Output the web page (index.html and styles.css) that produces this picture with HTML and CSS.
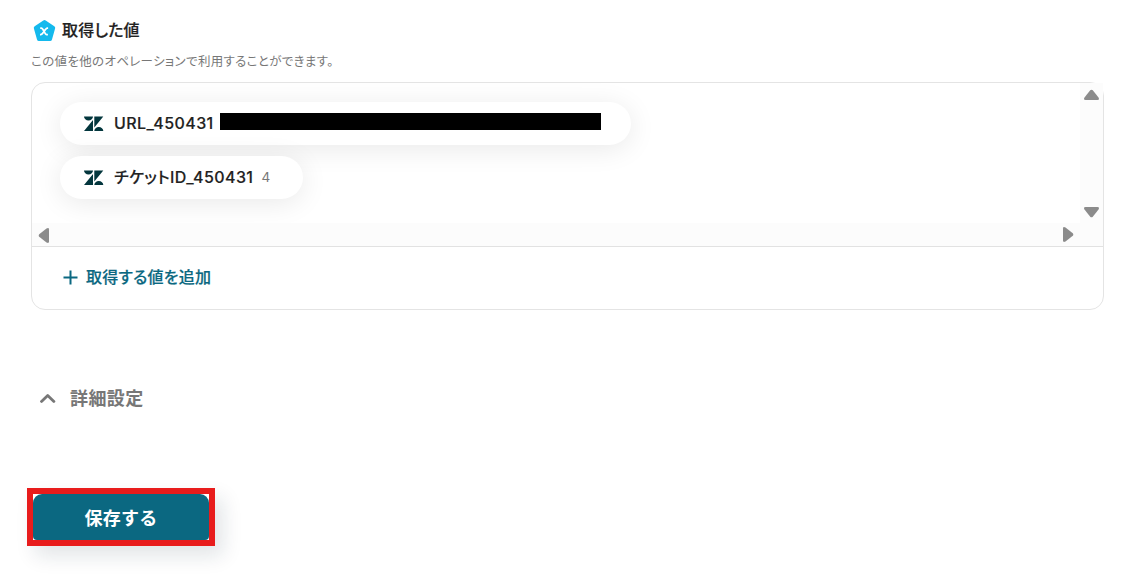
FILE: index.html
```
<!DOCTYPE html>
<html lang="ja">
<head>
    <meta charset="UTF-8">
    <meta name="viewport" content="width=device-width, initial-scale=1.0">
    <title>取得した値</title>
    <link rel="stylesheet" href="styles.css">
</head>
<body>
    <svg class="defs" width="0" height="0">
        <symbol id="zendesk" viewBox="0 0 20 16">
            <path d="M9 4.1V15H0zM9 .5a4.5 4 0 0 1-9 0zM10.3 15a4.5 4 0 0 1 9 0zM10.3 11.4V.5h9z"/>
        </symbol>
        <symbol id="arrow" viewBox="0 0 16 12">
            <path d="M6.2 1.2Q7.5 .2 8.8 1.2L14.5 8.5Q15.8 11 13.5 11H1.5Q-.8 11 .5 8.5z"/>
        </symbol>
    </svg>

    <div class="title">
        <svg class="badge" width="24" height="24" viewBox="0 0 24 24">
            <path d="M11.3 1.4a2 2 0 0 1 2.4 0l8.6 5.8a2 2 0 0 1 .8 2.3l-3.1 11a2 2 0 0 1-2 1.5h-11a2 2 0 0 1-2-1.5l-3.1-11a2 2 0 0 1 .8-2.3z" fill="#14b9ed"/>
            <path d="M8.2 9.2h1.2c2 0 3.2 6.4 5.2 6.4h1.3M16.1 9.2h-.8c-2.2 0-4.4 6.4-6.6 6.4H8" fill="none" stroke="#fff" stroke-width="1.8"/>
        </svg>
        <h3>取得した値</h3>
    </div>
    <p class="note">この値を他のオペレーションで利用することができます。</p>

    <div class="panel">
        <div class="values">
            <div class="list">
                <div class="pill">
                    <svg class="logo" width="20" height="16"><use href="#zendesk"/></svg>
                    <span class="name">URL_450431</span>
                    <span class="mask"></span>
                </div>
                <div class="pill">
                    <svg class="logo" width="20" height="16"><use href="#zendesk"/></svg>
                    <span class="name">チケットID_450431</span>
                    <span class="value">4</span>
                </div>
            </div>
            <div class="bar-y">
                <svg class="arrow" width="16" height="12"><use href="#arrow"/></svg>
                <svg class="arrow down" width="16" height="12"><use href="#arrow"/></svg>
            </div>
            <div class="bar-x">
                <svg class="arrow left" width="16" height="12"><use href="#arrow"/></svg>
                <svg class="arrow right" width="16" height="12"><use href="#arrow"/></svg>
            </div>
        </div>
        <div class="add">
            <svg width="15" height="15" viewBox="0 0 15 15"><path d="M7.5 .5v14M.5 7.5h14" stroke="#0b6881" stroke-width="2"/></svg>
            <span>取得する値を追加</span>
        </div>
    </div>

    <div class="detail">
        <svg width="16" height="10" viewBox="0 0 16 10"><path d="M1.5 8.4L7.7 2.4l6.2 6" fill="none" stroke="#777" stroke-width="2.8" stroke-linecap="round" stroke-linejoin="round"/></svg>
        <span>詳細設定</span>
    </div>

    <div class="frame">
        <button class="save">保存する</button>
    </div>
</body>
</html>
```
FILE: styles.css
```
* {
    box-sizing: border-box;
}
body {
    margin: 0;
    padding: 19px 19px 0 31px;
    height: 577px;
    overflow: hidden;
    background: #fff;
    color: #222;
    font-family: Inter, "Noto Sans CJK JP", sans-serif;
    font-feature-settings: "palt";
    letter-spacing: 0.4px;
}
.defs {
    display: block;
}
.title {
    display: flex;
    align-items: center;
    gap: 6px;
    height: 24px;
    padding-left: 1px;
}
.title h3 {
    margin: 0;
    padding-bottom: 2px;
    font-size: 16px;
    font-weight: 500;
    line-height: 24px;
    letter-spacing: 0.2px;
    -webkit-text-stroke: 0.2px;
}
.note {
    margin: 9px 0 10px;
    font-size: 12.5px;
    line-height: 20px;
    letter-spacing: 0.33px;
    color: #777;
}
.panel {
    width: 1073px;
    height: 228px;
    border: 1px solid #e4e4e4;
    border-radius: 14px;
}
.values {
    display: grid;
    grid-template-columns: 1fr 23px;
    grid-template-rows: 140px 23px;
    border-bottom: 1px solid #e2e2e2;
}
.list {
    display: flex;
    flex-direction: column;
    align-items: flex-start;
    gap: 11px;
    padding: 19px 28px;
    overflow: hidden;
    border-top-left-radius: 13px;
}
.pill {
    display: flex;
    align-items: center;
    height: 43px;
    padding: 0 30px 0 24px;
    border-radius: 22px;
    background: #fff;
    box-shadow: 0 4px 28px rgba(0, 0, 0, 0.09);
}
.logo {
    fill: #03363d;
    margin-right: 10px;
}
.name {
    padding-bottom: 2px;
    font-size: 16px;
    font-weight: 500;
    line-height: 24px;
    -webkit-text-stroke: 0.15px;
}
.mask {
    width: 381px;
    height: 17px;
    margin: -5px 0 0 6px;
    background: #000;
}
.value {
    margin: 0 2px 0 8px;
    padding-bottom: 1px;
    font-size: 13.5px;
    color: #777;
}
.bar-y {
    display: flex;
    flex-direction: column;
    align-items: center;
    justify-content: space-between;
    padding: 6px 0 5px;
    background: #fcfcfc;
}
.bar-x {
    grid-column: 1 / 3;
    display: flex;
    align-items: center;
    justify-content: space-between;
    padding: 0 27px 0 4px;
    background: #fcfcfc;
}
.arrow {
    fill: #8b8b8b;
}
.down {
    transform: scaleY(-1);
}
.left {
    transform: rotate(-90deg);
}
.right {
    transform: rotate(90deg);
}
.add {
    display: flex;
    align-items: center;
    gap: 8px;
    height: 60px;
    padding-left: 31px;
    font-size: 16px;
    font-weight: 500;
    letter-spacing: 0.2px;
    color: #0b6881;
    -webkit-text-stroke: 0.2px;
}
.add span {
    padding-bottom: 2px;
}
.detail {
    display: flex;
    align-items: center;
    gap: 14px;
    height: 28px;
    margin-top: 74px;
    padding-left: 9px;
    font-size: 18px;
    font-weight: 600;
    color: #777;
}
.detail span {
    padding-bottom: 2px;
}
.frame {
    width: 188px;
    height: 58px;
    margin: 76px 0 0 -4px;
    border: 6px solid #e81c1c;
    background: #fff;
    box-shadow: 8px 10px 20px rgba(20, 40, 60, 0.12);
}
.save {
    display: block;
    width: 100%;
    height: 100%;
    padding: 0;
    border: none;
    border-radius: 9px 9px 4px 4px;
    background: #0b6881;
    color: #fff;
    font-family: inherit;
    font-size: 18px;
    font-weight: 700;
    letter-spacing: 0.2px;
}
```
